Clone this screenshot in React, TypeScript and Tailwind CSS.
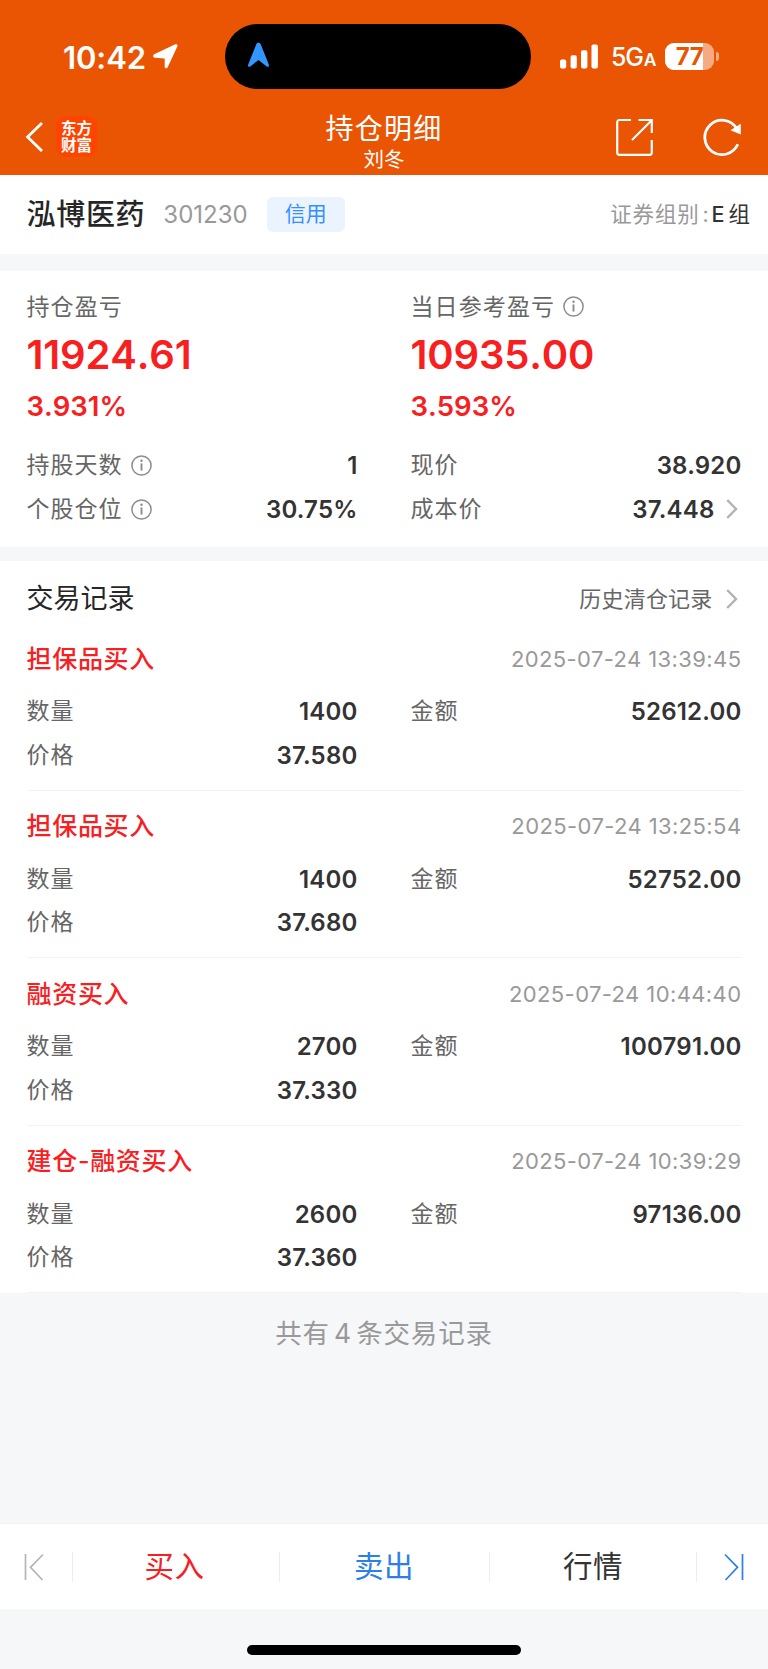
import { ReactNode } from "react";

interface TradeRecord {
  type: string;
  time: string;
  quantity: string;
  amount: string;
  price: string;
}

const RECORDS: TradeRecord[] = [
  { type: "担保品买入", time: "2025-07-24 13:39:45", quantity: "1400", amount: "52612.00", price: "37.580" },
  { type: "担保品买入", time: "2025-07-24 13:25:54", quantity: "1400", amount: "52752.00", price: "37.680" },
  { type: "融资买入", time: "2025-07-24 10:44:40", quantity: "2700", amount: "100791.00", price: "37.330" },
  { type: "建仓-融资买入", time: "2025-07-24 10:39:29", quantity: "2600", amount: "97136.00", price: "37.360" },
];

const InfoIcon = () => (
  <svg className="w-[21px] h-[21px] shrink-0" viewBox="0 0 21 21" fill="none" stroke="#8c8c8c">
    <circle cx="10.5" cy="10.5" r="9.6" strokeWidth="1.5" />
    <path d="M10.5 8.4v7.2" strokeWidth="1.9" />
    <circle cx="10.5" cy="5.7" r="1.2" fill="#8c8c8c" stroke="none" />
  </svg>
);

const ChevronIcon = () => (
  <svg className="w-[12px] h-[20px] shrink-0" viewBox="0 0 12 20" fill="none" stroke="#b3b3b3" strokeWidth="2.5">
    <path d="M1.2 1l8.8 9-8.8 9" />
  </svg>
);

function StatusBar() {
  return (
    <div className="h-[100px] pt-[24px] flex items-start text-white">
      <div className="w-[225px] h-[65px] pl-[63px] flex items-center">
        <span className="w-[90px] text-[31px] leading-[65px] pt-px font-semibold tracking-[-0.1px]">10:42</span>
        <svg className="w-[25px] h-[25px]" viewBox="0 0 25 25" fill="#fff">
          <path d="M1.2 10.3 21.8.5c2-.9 3.2.2 2.4 2.2L14.8 23.1c-.8 1.8-3.1 1.6-3.1-.4V14.4L1.9 13.7c-2-.1-2.500-2.500-.7-3.400z" />
        </svg>
      </div>
      <div className="w-[306px] h-[65px] rounded-full bg-black flex items-center pl-[22px]">
        <svg className="w-[23px] h-[26px] mb-1" viewBox="0 0 23 26" fill="#3395ff">
          <path d="M9.4 2C10 .2 13 .2 13.6 2l8.2 20.6c.7 1.8-.5 2.9-2.1 1.8L11.5 18l-8.2 6.4c-1.6 1.1-2.8 0-2.1-1.8z" />
        </svg>
      </div>
      <div className="h-[65px] pl-[29px] flex items-center">
        <svg className="w-[38px] h-[25px]" viewBox="0 0 38 25" fill="#fff">
          <rect x="0" y="15.5" width="6.2" height="9" rx="1.7" />
          <rect x="10.6" y="11.3" width="6.2" height="13.2" rx="1.7" />
          <rect x="21" y="6.2" width="6.4" height="18.3" rx="1.7" />
          <rect x="31.5" y="0.5" width="6.4" height="24" rx="1.7" />
        </svg>
        <div className="ml-[13px] w-[54px] pt-[4px] flex items-baseline leading-[62px] font-medium">
          <span className="text-[25px] tracking-[-1.2px]">5G</span>
          <span className="ml-[1px] text-[17.5px] font-semibold">A</span>
        </div>
        <div className="relative w-[49px] h-[27px] rounded-[9px] bg-white/50 overflow-hidden">
          <div className="w-[38px] h-[27px] bg-white" />
          <span className="absolute inset-0 text-center text-[24px] leading-[27px] font-bold tracking-[-0.4px] text-[#ea5504]">77</span>
        </div>
        <div className="ml-[2px] w-[3px] h-[9px] rounded-r-full bg-white/50" />
      </div>
    </div>
  );
}

function NavBar() {
  return (
    <div className="h-[75px] flex items-start text-white">
      <div className="w-[256px] h-[75px] pl-[25px] pt-[16px] flex">
        <svg className="mt-[6px] w-[18px] h-[30px]" viewBox="0 0 18 30" fill="none" stroke="#fff" strokeWidth="2.8">
          <path d="M17 1 2.6 15 17 29" />
        </svg>
        <div className="ml-[13px] w-[41px] h-[41px] rounded-[9px] bg-[#ff4400] flex flex-col items-center justify-center text-[15.5px] leading-[17px] font-bold">
          <span>东方</span>
          <span>财富</span>
        </div>
      </div>
      <div className="w-[256px] text-center">
        <div className="h-[46px] pt-[2px] text-[28px] leading-[55px] tracking-[1.3px]">持仓明细</div>
        <div className="text-[20.5px] leading-[28px]">刘冬</div>
      </div>
      <div className="w-[256px] pl-[104px] pt-[18px] flex">
        <svg className="w-[37px] h-[38px]" viewBox="0 0 37 38" fill="none" stroke="#fff" strokeWidth="2.2">
          <path d="M15 2H3.5Q1.200 2 1.200 4.500V34.500Q1.200 36.800 3.500 36.800H33.500Q35.800 36.800 35.800 34.500V22" />
          <path d="M22.500 2H35.800V15" />
          <path d="M36 2 16 22" />
        </svg>
        <svg className="ml-[50px] w-[40px] h-[39px]" viewBox="0 0 40 39" fill="none" stroke="#fff" strokeWidth="2.8">
          <path d="M33.600 10.300A17.200 17.200 0 1 0 34.800 26.300" />
          <path d="M37.800 5.800V16.500L27.500 12.200Z" fill="#fff" stroke="none" />
        </svg>
      </div>
    </div>
  );
}

function Field({ label, value, info, arrow }: { label: string; value: string; info?: boolean; arrow?: boolean }) {
  return (
    <div className="h-[43.5px] flex items-center">
      <span className="text-[23px] leading-[43px] tracking-[1px] text-[#666]">{label}</span>
      {info && <span className="ml-[8px]"><InfoIcon /></span>}
      <span className="ml-auto text-[24px] leading-[43px] font-semibold tracking-[0.2px] text-[#333]">{value}</span>
      {arrow && <span className="ml-[11px] mr-[4px]"><ChevronIcon /></span>}
    </div>
  );
}

function Profit({ label, value, percent, info }: { label: string; value: string; percent: string; info?: boolean }) {
  return (
    <div>
      <div className="h-[44px] flex items-center text-[23px] tracking-[1.1px] text-[#666]">
        {label}
        {info && <span className="ml-[8px] mb-px"><InfoIcon /></span>}
      </div>
      <div className="h-[54px] text-[40px] leading-[52px] font-semibold tracking-[-0.15px] [font-kerning:none] text-[#f8201f]">{value}</div>
      <div className="h-[61px] text-[27.5px] leading-[46px] font-semibold [font-kerning:none] text-[#f8201f]">{percent}</div>
    </div>
  );
}

function Record({ record }: { record: TradeRecord }) {
  return (
    <div className="mx-[26.5px] h-[167.5px] border-b border-[#f2f3f5]">
      <div className="h-[67px] pt-[4px] flex items-center justify-between">
        <span className="text-[25px] leading-[50px] font-medium tracking-[0.7px] text-[#f8201f]">{record.type}</span>
        <span className="text-[22px] leading-[50px] tracking-[0.4px] text-[#999]">{record.time}</span>
      </div>
      <div className="grid grid-cols-2 gap-x-[53px]">
        <Field label="数量" value={record.quantity} />
        <Field label="金额" value={record.amount} />
        <Field label="价格" value={record.price} />
      </div>
    </div>
  );
}

const Tab = ({ className, children }: { className: string; children: ReactNode }) => (
  <button type="button" className={`h-[85px] text-[29.5px] leading-[83px] tracking-[0.5px] ${className}`}>
    {children}
  </button>
);

const Separator = () => <div className="w-px h-[30px] bg-[#ededed]" />;

export default function App() {
  return (
    <div className="w-[768px] h-[1669px] flex flex-col overflow-hidden bg-[#f6f7f9] font-[Inter,'Noto_Sans_CJK_SC',sans-serif]" lang="zh-CN">
      <header className="h-[175px] shrink-0 bg-[#ea5504]">
        <StatusBar />
        <NavBar />
      </header>

      <section className="h-[79px] shrink-0 bg-white flex items-center pl-[26.5px] pr-[18px]">
        <h1 className="text-[29px] font-medium tracking-[0.7px] text-[#262626]">泓博医药</h1>
        <span className="ml-[18px] text-[24px] text-[#999]">301230</span>
        <span className="ml-[19px] w-[78px] h-[35px] rounded-[6px] bg-[#ebf3ff] text-center text-[21px] leading-[34px] text-[#3490ff]">信用</span>
        <div className="ml-auto flex items-center text-[21.5px] text-[#999]">
          <span className="tracking-[0.8px]">证券组别</span>
          <span className="ml-[3px] w-[9px]">:</span>
          <span className="font-medium text-[#333]">E</span>
          <span className="ml-[4px] text-[#333]">组</span>
        </div>
      </section>

      <section className="mt-[17px] h-[276px] shrink-0 bg-white px-[26.5px] pt-[14px]">
        <div className="grid grid-cols-2 gap-x-[53px]">
          <Profit label="持仓盈亏" value="11924.61" percent="3.931%" />
          <Profit label="当日参考盈亏" value="10935.00" percent="3.593%" info />
          <Field label="持股天数" value="1" info />
          <Field label="现价" value="38.920" />
          <Field label="个股仓位" value="30.75%" info />
          <Field label="成本价" value="37.448" arrow />
        </div>
      </section>

      <section className="mt-[14px] h-[732px] shrink-0 bg-white">
        <div className="h-[62px] pt-[13px] px-[26.5px] flex items-center justify-between">
          <h2 className="text-[27px] leading-[50px] text-[#262626]">交易记录</h2>
          <div className="flex items-center text-[22px] leading-[50px] tracking-[0.2px] text-[#666]">
            历史清仓记录
            <span className="ml-[13px] mr-[4px]"><ChevronIcon /></span>
          </div>
        </div>
        {RECORDS.map((record) => (
          <Record key={record.time} record={record} />
        ))}
      </section>

      <div className="h-[230px] shrink-0 pt-[15px] text-center text-[26.5px] leading-[50px] tracking-[0.8px] [word-spacing:-4px] text-[#999]">
        共有 4 条交易记录
      </div>

      <nav className="h-[86px] shrink-0 bg-white border-t border-[#f0f1f2] flex items-center">
        <div className="w-[72px] pl-[24px]">
          <svg className="w-[20px] h-[28px]" viewBox="0 0 20 28" fill="none" stroke="#b5b5b5" strokeWidth="1.7">
            <path d="M1.5 1v26M19 1.5 6.5 14.3 18.5 27" />
          </svg>
        </div>
        <Separator />
        <Tab className="w-[206px] pr-[3px] text-[#f8201f]">买入</Tab>
        <Separator />
        <Tab className="w-[209px] pr-[1px] text-[#2c7fe8]">卖出</Tab>
        <Separator />
        <Tab className="w-[206px] text-[#333]">行情</Tab>
        <Separator />
        <div className="pl-[27px]">
          <svg className="w-[20px] h-[28px]" viewBox="0 0 20 28" fill="none" stroke="#2c7fe8" strokeWidth="1.7">
            <path d="M18.5 1v26M1 1.5 13.5 14.3 1.5 27" />
          </svg>
        </div>
      </nav>

      <div className="mx-auto mt-[36px] w-[274px] h-[10px] shrink-0 rounded-full bg-black" />
    </div>
  );
}
